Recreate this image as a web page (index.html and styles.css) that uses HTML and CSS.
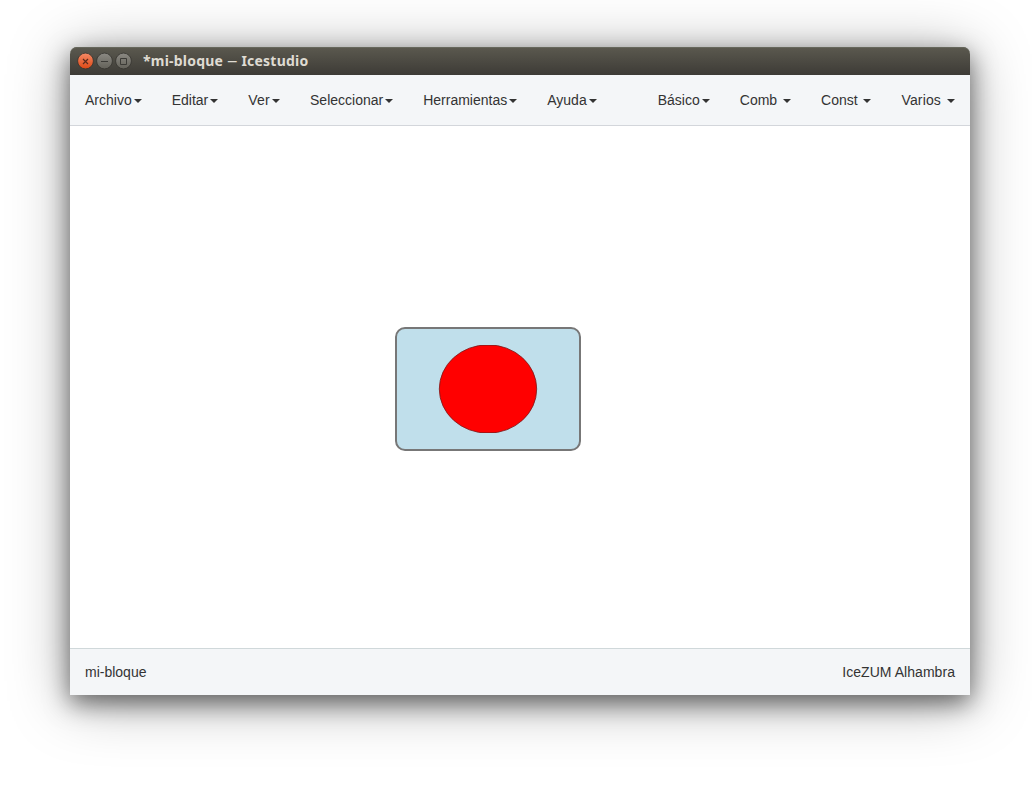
FILE: index.html
```html
<!DOCTYPE html>
<html lang="es">
<head>
<meta charset="utf-8">
<title>mi-bloque – Icestudio</title>
<link rel="stylesheet" href="styles.css">
</head>
<body>
<div class="window">
  <header class="titlebar">
    <svg class="controls" width="56" height="18" viewBox="0 0 56 18">
      <defs>
        <linearGradient id="close" x1="0" y1="0" x2="0" y2="1"><stop offset="0" stop-color="#f58a67"/><stop offset="1" stop-color="#dd4814"/></linearGradient>
        <linearGradient id="plain" x1="0" y1="0" x2="0" y2="1"><stop offset="0" stop-color="#8b8983"/><stop offset="1" stop-color="#636159"/></linearGradient>
      </defs>
      <circle cx="8.5" cy="9" r="7.9" fill="url(#close)" stroke="#35342f" stroke-width=".8"/>
      <circle cx="27.5" cy="9" r="7.9" fill="url(#plain)" stroke="#35342f" stroke-width=".8"/>
      <circle cx="46.5" cy="9" r="7.9" fill="url(#plain)" stroke="#35342f" stroke-width=".8"/>
      <path d="M6 7l5 5M11 7l-5 5" stroke="#5a2a1c" stroke-width="1.2"/>
      <path d="M24 9.5h7" stroke="#3c3b37"/>
      <path d="M43.500 6.500h6v6h-6z" fill="none" stroke="#3c3b37"/>
    </svg>
    <span class="title">*mi-bloque <span class="dash">–</span> Icestudio</span>
  </header>
  <nav class="menubar">
    <div class="menu">
      <span class="item">Archivo<i class="caret"></i></span>
      <span class="item">Editar<i class="caret"></i></span>
      <span class="item ver">Ver<i class="caret"></i></span>
      <span class="item">Seleccionar<i class="caret"></i></span>
      <span class="item">Herramientas<i class="caret"></i></span>
      <span class="item">Ayuda<i class="caret"></i></span>
    </div>
    <div class="menu">
      <span class="item">Básico<i class="caret"></i></span>
      <span class="item">Comb <i class="caret"></i></span>
      <span class="item">Const <i class="caret"></i></span>
      <span class="item varios">Varios <i class="caret"></i></span>
    </div>
  </nav>
  <main class="canvas">
    <div class="block">
      <svg width="100" height="88" viewBox="0 0 100 88">
        <ellipse cx="50" cy="44" rx="48.700" ry="44.200" fill="red" stroke="#7a1a1a" stroke-width=".8"/>
        <path d="M42 .4h16M42 87.600h16" stroke="#a01515" stroke-width=".8"/>
      </svg>
    </div>
  </main>
  <footer class="footer"><span>mi-bloque</span><span class="board">IceZUM Alhambra</span></footer>
</div>
</body>
</html>
```
FILE: styles.css
```css
* { box-sizing: border-box; }
body {
  margin: 0;
  height: 785px;
  padding: 47px 62px 0 70px;
  background: #fff;
  overflow: hidden;
  font: 14px/20px "Liberation Sans", Arial, sans-serif;
  color: #333;
}
.window {
  width: 900px;
  height: 648px;
  display: flex;
  flex-direction: column;
  border-radius: 7px 7px 0 0;
  box-shadow: 0 8px 24px rgba(0, 0, 0, .52), 0 6px 60px rgba(0, 0, 0, .34);
}
.titlebar {
  height: 28px;
  display: flex;
  align-items: center;
  padding: 0 7px;
  border-radius: 7px 7px 0 0;
  background: linear-gradient(#5b594f, #3d3b36);
  box-shadow: inset 0 1px #66675c;
}
.controls { display: block; }
.title {
  margin-left: 10px;
  font: bold 14px/28px "Noto Sans", sans-serif;
  letter-spacing: .22px;
  color: #dfdbd2;
  white-space: nowrap;
}
.dash {
  display: inline-block;
  width: 10.5px;
  font-weight: 400;
  transform: scaleX(1.5);
  transform-origin: left;
}
.menubar {
  height: 51px;
  display: flex;
  justify-content: space-between;
  background: #f4f6f8;
  border-bottom: 1px solid #d3d6db;
}
.menu { display: flex; }
.item {
  padding: 15px;
  white-space: pre;
}
.ver { letter-spacing: .25px; }
.varios { letter-spacing: .14px; }
.board { letter-spacing: .05px; }
.caret {
  display: inline-block;
  margin-left: 2px;
  vertical-align: middle;
  border-top: 4px solid #333;
  border-left: 4px solid transparent;
  border-right: 4px solid transparent;
}
.canvas {
  flex: 1;
  background: #fff;
  padding: 201px 0 0 325px;
}
.block {
  width: 186px;
  height: 124px;
  display: flex;
  align-items: center;
  justify-content: center;
  background: #c0dfeb;
  border: 2px solid #777;
  border-radius: 10px;
}
.footer {
  height: 47px;
  display: flex;
  justify-content: space-between;
  padding: 13px 15px 0;
  background: #f4f6f8;
  border-top: 1px solid #d0d8da;
}
```
